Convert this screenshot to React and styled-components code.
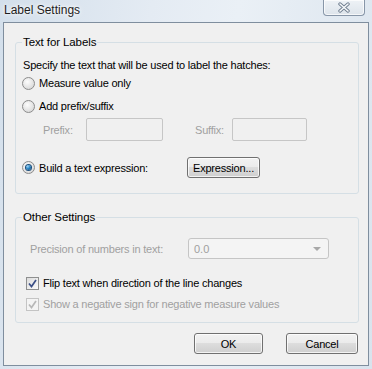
import React from 'react';
import styled, { createGlobalStyle } from 'styled-components';

const GlobalStyle = createGlobalStyle`
  html, body {
    margin: 0;
    padding: 0;
    background: #dce6f0;
  }
  body {
    font-family: "Liberation Sans", Arial, sans-serif;
    font-size: 11px;
  }
`;

const Win = styled.div`
  width: 372px;
  height: 369px;
  display: flex;
  flex-direction: column;
  box-sizing: border-box;
  background: linear-gradient(100deg, #d3dfeb 0%, #e4ebf3 35%, #eaf0f6 55%, #d9e3ed 100%);
`;

const TitleBar = styled.div`
  height: 22px;
  display: flex;
  align-items: flex-start;
  justify-content: space-between;
`;

const Title = styled.div`
  padding: 3px 0 0 4px;
  font-size: 12px;
  line-height: 15px;
  color: #1e1e1e;
  text-shadow: 0 0 6px #fff, 0 0 3px #fff;
`;

const CloseBtn = styled.div`
  width: 42px;
  height: 16px;
  margin-right: 7px;
  box-sizing: border-box;
  border: 1px solid #8796a8;
  border-top: none;
  border-radius: 0 0 4px 4px;
  background: linear-gradient(#eef2f6, #dde4eb);
  box-shadow: inset 0 0 0 1px rgba(255, 255, 255, 0.7);
  display: flex;
  align-items: center;
  justify-content: center;
`;

const Client = styled.div`
  flex: 1;
  margin: 0 3px 3px 3px;
  border: 1px solid #7f8e9e;
  background: #f0f0f0;
  padding: 0 9px 0 11px;
  display: flex;
  flex-direction: column;
`;

const Group = styled.fieldset`
  margin: ${p => p.$mt}px 0 0;
  padding: 0 0 ${p => p.$pb}px 6px;
  border: 1px solid #d5dfe5;
  border-radius: 3px;
  min-width: 0;
  display: flex;
  flex-direction: column;
`;

const Legend = styled.legend`
  padding: 0 1px;
  font-size: 11.5px;
  line-height: 16px;
  letter-spacing: -0.1px;
  color: #000;
`;

const Row = styled.div`
  display: flex;
  align-items: center;
  margin-top: ${p => p.$mt || 0}px;
  margin-left: ${p => p.$ml || 0}px;
  min-height: 16px;
`;

const Text = styled.span`
  font-size: 11px;
  line-height: 16px;
  letter-spacing: -0.2px;
  color: ${p => (p.$disabled ? '#a0a0a0' : '#000')};
  width: ${p => (p.$w ? `${p.$w}px` : 'auto')};
  margin-left: ${p => p.$ml || 0}px;
  white-space: nowrap;
  flex-shrink: 0;
`;

const RadioDot = styled.span`
  width: 13px;
  height: 13px;
  box-sizing: border-box;
  border-radius: 50%;
  border: 1px solid #8c8c8c;
  background: radial-gradient(circle at 40% 35%, #fdfdfd 0%, #e4e4e4 55%, #cfcfcf 100%);
  display: flex;
  align-items: center;
  justify-content: center;
  flex-shrink: 0;
  margin-right: 4px;

  &::after {
    content: '';
    width: 5px;
    height: 5px;
    border-radius: 50%;
    display: ${p => (p.$on ? 'block' : 'none')};
    background: radial-gradient(circle at 35% 30%, #9bd2f5 0%, #2a86c5 45%, #0e3f6e 100%);
    box-shadow: 0 0 0 1px #1c4e7c;
  }
`;

const CheckBox = styled.span`
  width: 13px;
  height: 13px;
  box-sizing: border-box;
  border: 1px solid ${p => (p.$disabled ? '#c4c4c4' : '#8e8f8f')};
  background: ${p => (p.$disabled ? '#f4f4f4' : 'linear-gradient(135deg, #dcdcdc, #fbfbfb)')};
  display: flex;
  align-items: center;
  justify-content: center;
  flex-shrink: 0;
  margin-right: 4px;
`;

const Field = styled.div`
  width: ${p => p.$w}px;
  height: ${p => p.$h}px;
  box-sizing: border-box;
  border: 1px solid #c6c6c6;
  border-radius: 2px;
  background: #f0f0f0;
  flex-shrink: 0;
`;

const Combo = styled.div`
  width: 141px;
  height: 21px;
  box-sizing: border-box;
  border: 1px solid #c5c5c5;
  border-radius: 3px;
  background: #f4f4f4;
  display: flex;
  align-items: center;
  justify-content: space-between;
  padding: 0 7px 0 5px;
  color: #a0a0a0;
  font-size: 11px;
  flex-shrink: 0;
`;

const Arrow = styled.span`
  width: 0;
  height: 0;
  border-left: 4px solid transparent;
  border-right: 4px solid transparent;
  border-top: 4px solid #a8a8a8;
`;

const Button = styled.div`
  width: ${p => p.$w}px;
  height: ${p => p.$h || 21}px;
  box-sizing: border-box;
  border: 1px solid #707070;
  border-radius: 3px;
  background: linear-gradient(#f2f2f2 0%, #ebebeb 49%, #dddddd 50%, #cfcfcf 100%);
  box-shadow: inset 0 0 0 1px rgba(255, 255, 255, 0.75);
  display: flex;
  align-items: center;
  justify-content: center;
  font-size: 11px;
  letter-spacing: -0.2px;
  color: #000;
  margin-left: ${p => p.$ml || 0}px;
  flex-shrink: 0;
`;

const ButtonBar = styled.div`
  display: flex;
  justify-content: flex-end;
  gap: 23px;
  margin: 10px 1px 0 0;
`;

const Check = ({ disabled }) => (
  <svg width="9" height="9" viewBox="0 0 9 9">
    <path
      d="M1 4.5 L3.5 7.5 L8 1"
      fill="none"
      stroke={disabled ? '#b8b8b8' : '#3b4f86'}
      strokeWidth="1.7"
    />
  </svg>
);

const Radio = ({ on, children, w }) => (
  <>
    <RadioDot $on={on} />
    <Text $w={w}>{children}</Text>
  </>
);

export default function App() {
  return (
    <Win>
      <GlobalStyle />
      <TitleBar>
        <Title>Label Settings</Title>
        <CloseBtn>
          <svg width="14" height="11" viewBox="0 0 14 11">
            <path d="M3 2 L11 9 M11 2 L3 9" stroke="#6f7e8f" strokeWidth="3.4" strokeLinecap="round" />
            <path d="M3 2 L11 9 M11 2 L3 9" stroke="#f7f9fb" strokeWidth="1.6" strokeLinecap="round" />
          </svg>
        </CloseBtn>
      </TitleBar>
      <Client>
        <Group $mt={11} $pb={15}>
          <Legend>Text for Labels</Legend>
          <Row $mt={7}>
            <Text $ml={1}>Specify the text that will be used to label the hatches:</Text>
          </Row>
          <Row $mt={2}>
            <Radio>Measure value only</Radio>
          </Row>
          <Row $mt={7}>
            <Radio>Add prefix/suffix</Radio>
          </Row>
          <Row $mt={4} $ml={21}>
            <Text $disabled $w={43}>Prefix:</Text>
            <Field $w={77} $h={23} />
            <Text $disabled $w={37} $ml={32}>Suffix:</Text>
            <Field $w={75} $h={23} />
          </Row>
          <Row $mt={16}>
            <Radio on w={148}>Build a text expression:</Radio>
            <Button $w={73}>Expression...</Button>
          </Row>
        </Group>

        <Group $mt={15} $pb={10}>
          <Legend>Other Settings</Legend>
          <Row $mt={13} $ml={8}>
            <Text $disabled $w={158}>Precision of numbers in text:</Text>
            <Combo>
              <span>0.0</span>
              <Arrow />
            </Combo>
          </Row>
          <Row $mt={16} $ml={4}>
            <CheckBox>
              <Check />
            </CheckBox>
            <Text>Flip text when direction of the line changes</Text>
          </Row>
          <Row $mt={5} $ml={4}>
            <CheckBox $disabled>
              <Check disabled />
            </CheckBox>
            <Text $disabled>Show a negative sign for negative measure values</Text>
          </Row>
        </Group>

        <ButtonBar>
          <Button $w={69}>OK</Button>
          <Button $w={72}>Cancel</Button>
        </ButtonBar>
      </Client>
    </Win>
  );
}
